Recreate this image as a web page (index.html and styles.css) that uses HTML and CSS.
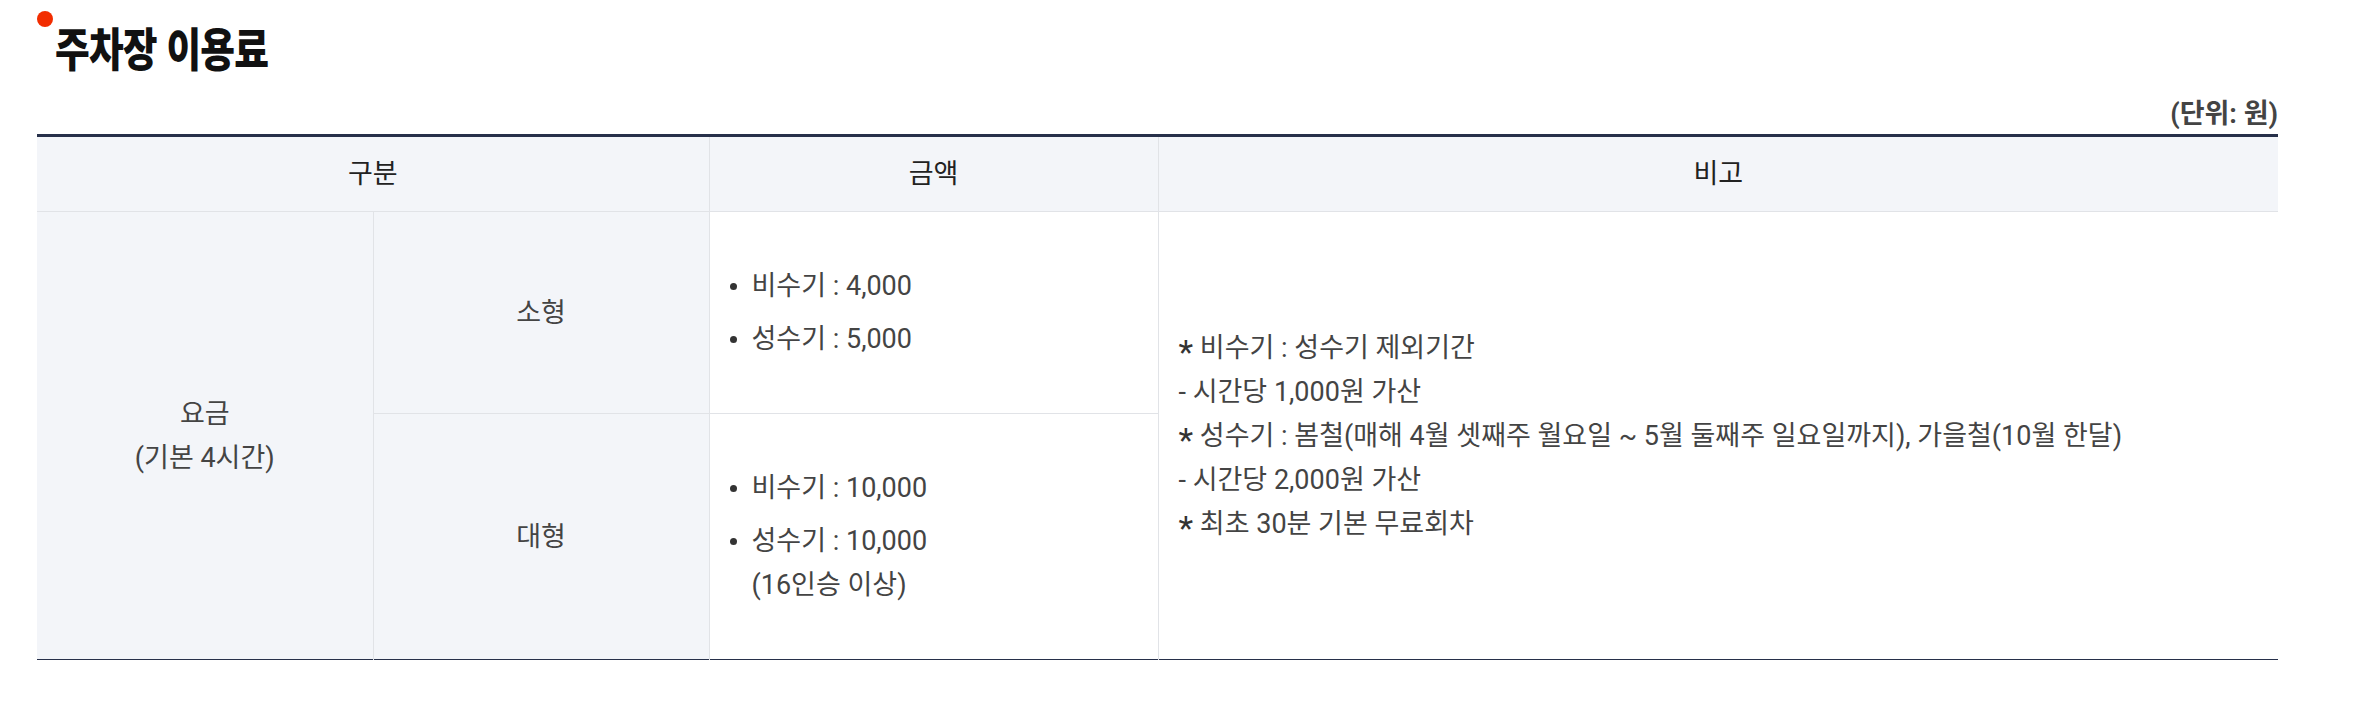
FILE: index.html
```html
<!DOCTYPE html>
<html lang="ko">
<head>
<meta charset="utf-8">
<title>주차장 이용료</title>
<link rel="stylesheet" href="styles.css">
</head>
<body>
<section class="fee">
  <h2 class="fee-title"><span class="fee-title-text">주차장 이용료</span></h2>
  <p class="fee-unit">(단위: 원)</p>
  <table class="fee-table">
    <colgroup>
      <col class="c1">
      <col class="c2">
      <col class="c3">
      <col class="c4">
    </colgroup>
    <thead>
      <tr>
        <th colspan="2">구분</th>
        <th>금액</th>
        <th>비고</th>
      </tr>
    </thead>
    <tbody>
      <tr>
        <td rowspan="2" class="cat">요금<br>(기본 4시간)</td>
        <td class="cat">소형</td>
        <td class="amount">
          <ul class="dots">
            <li>비수기 : 4,000</li>
            <li>성수기 : 5,000</li>
          </ul>
        </td>
        <td rowspan="2" class="note">
          <span class="ast">*</span> 비수기 : 성수기 제외기간<br>
          - 시간당 1,000원 가산<br>
          <span class="ast">*</span> 성수기 : 봄철(매해 4월 셋째주 월요일 ~ 5월 둘째주 일요일까지), 가을철(10월 한달)<br>
          - 시간당 2,000원 가산<br>
          <span class="ast">*</span> 최초 30분 기본 무료회차
        </td>
      </tr>
      <tr>
        <td class="cat">대형</td>
        <td class="amount">
          <ul class="dots">
            <li>비수기 : 10,000</li>
            <li>성수기 : 10,000<br>(16인승 이상)</li>
          </ul>
        </td>
      </tr>
    </tbody>
  </table>
</section>
</body>
</html>
```
FILE: styles.css
```css
html, body {
  margin: 0;
  padding: 0;
  background: #ffffff;
}

body {
  font-family: Roboto, "Noto Sans CJK KR", sans-serif;
  color: #444444;
}

.fee {
  width: 2241px;
  padding: 20px 0 0 37px;
}

.fee-title {
  position: relative;
  margin: 0;
  padding-left: 18px;
  font-family: "Noto Sans CJK KR", sans-serif;
  font-size: 46px;
  font-weight: 900;
  line-height: 52px;
  color: #111111;
}

.fee-title-text {
  display: inline-block;
  letter-spacing: -1px;
  transform: scaleX(0.82);
  transform-origin: left center;
}

.fee-title::before {
  content: "";
  position: absolute;
  left: 0;
  top: -9px;
  width: 16px;
  height: 16px;
  border-radius: 50%;
  background: #f22d00;
}

.fee-unit {
  margin: 27px 0 0;
  text-align: right;
  font-family: Roboto, "Noto Sans CJK KR", sans-serif;
  font-size: 27px;
  font-weight: 700;
  line-height: 31px;
  color: #444444;
}

.fee-table {
  width: 2241px;
  margin-top: 4px;
  border-collapse: collapse;
  table-layout: fixed;
  border-top: 3px solid #27304a;
  border-bottom: 1px solid #27304a;
  font-size: 27px;
  line-height: 44px;
}

.c1 { width: 336px; }
.c2 { width: 336px; }
.c3 { width: 449px; }
.c4 { width: 1120px; }

.fee-table th {
  padding: 15px 20px;
  background: #f3f5f9;
  font-weight: 400;
  color: #222222;
  text-align: center;
  border-bottom: 1px solid #e1e3e7;
  border-left: 1px solid #e1e3e7;
}

.fee-table td {
  padding: 52px 20px;
  vertical-align: middle;
  border-left: 1px solid #e1e3e7;
  border-top: 1px solid #e1e3e7;
}

.fee-table th:first-child,
.fee-table tbody tr:first-child td:first-child {
  border-left: none;
}

.fee-table td.cat {
  background: #f3f5f9;
  text-align: center;
  color: #444444;
}

.dots {
  margin: 0;
  padding: 0;
  list-style: none;
}

.dots li {
  position: relative;
  padding-left: 22px;
}

.dots li + li {
  margin-top: 9px;
}

.dots li::before {
  content: "";
  position: absolute;
  left: 0;
  top: 19px;
  width: 7px;
  height: 7px;
  border-radius: 50%;
  background: #333333;
}

.note {
  text-align: left;
}

.ast {
  font-size: 34px;
  line-height: 0;
  vertical-align: -7px;
  color: #333333;
}
```
